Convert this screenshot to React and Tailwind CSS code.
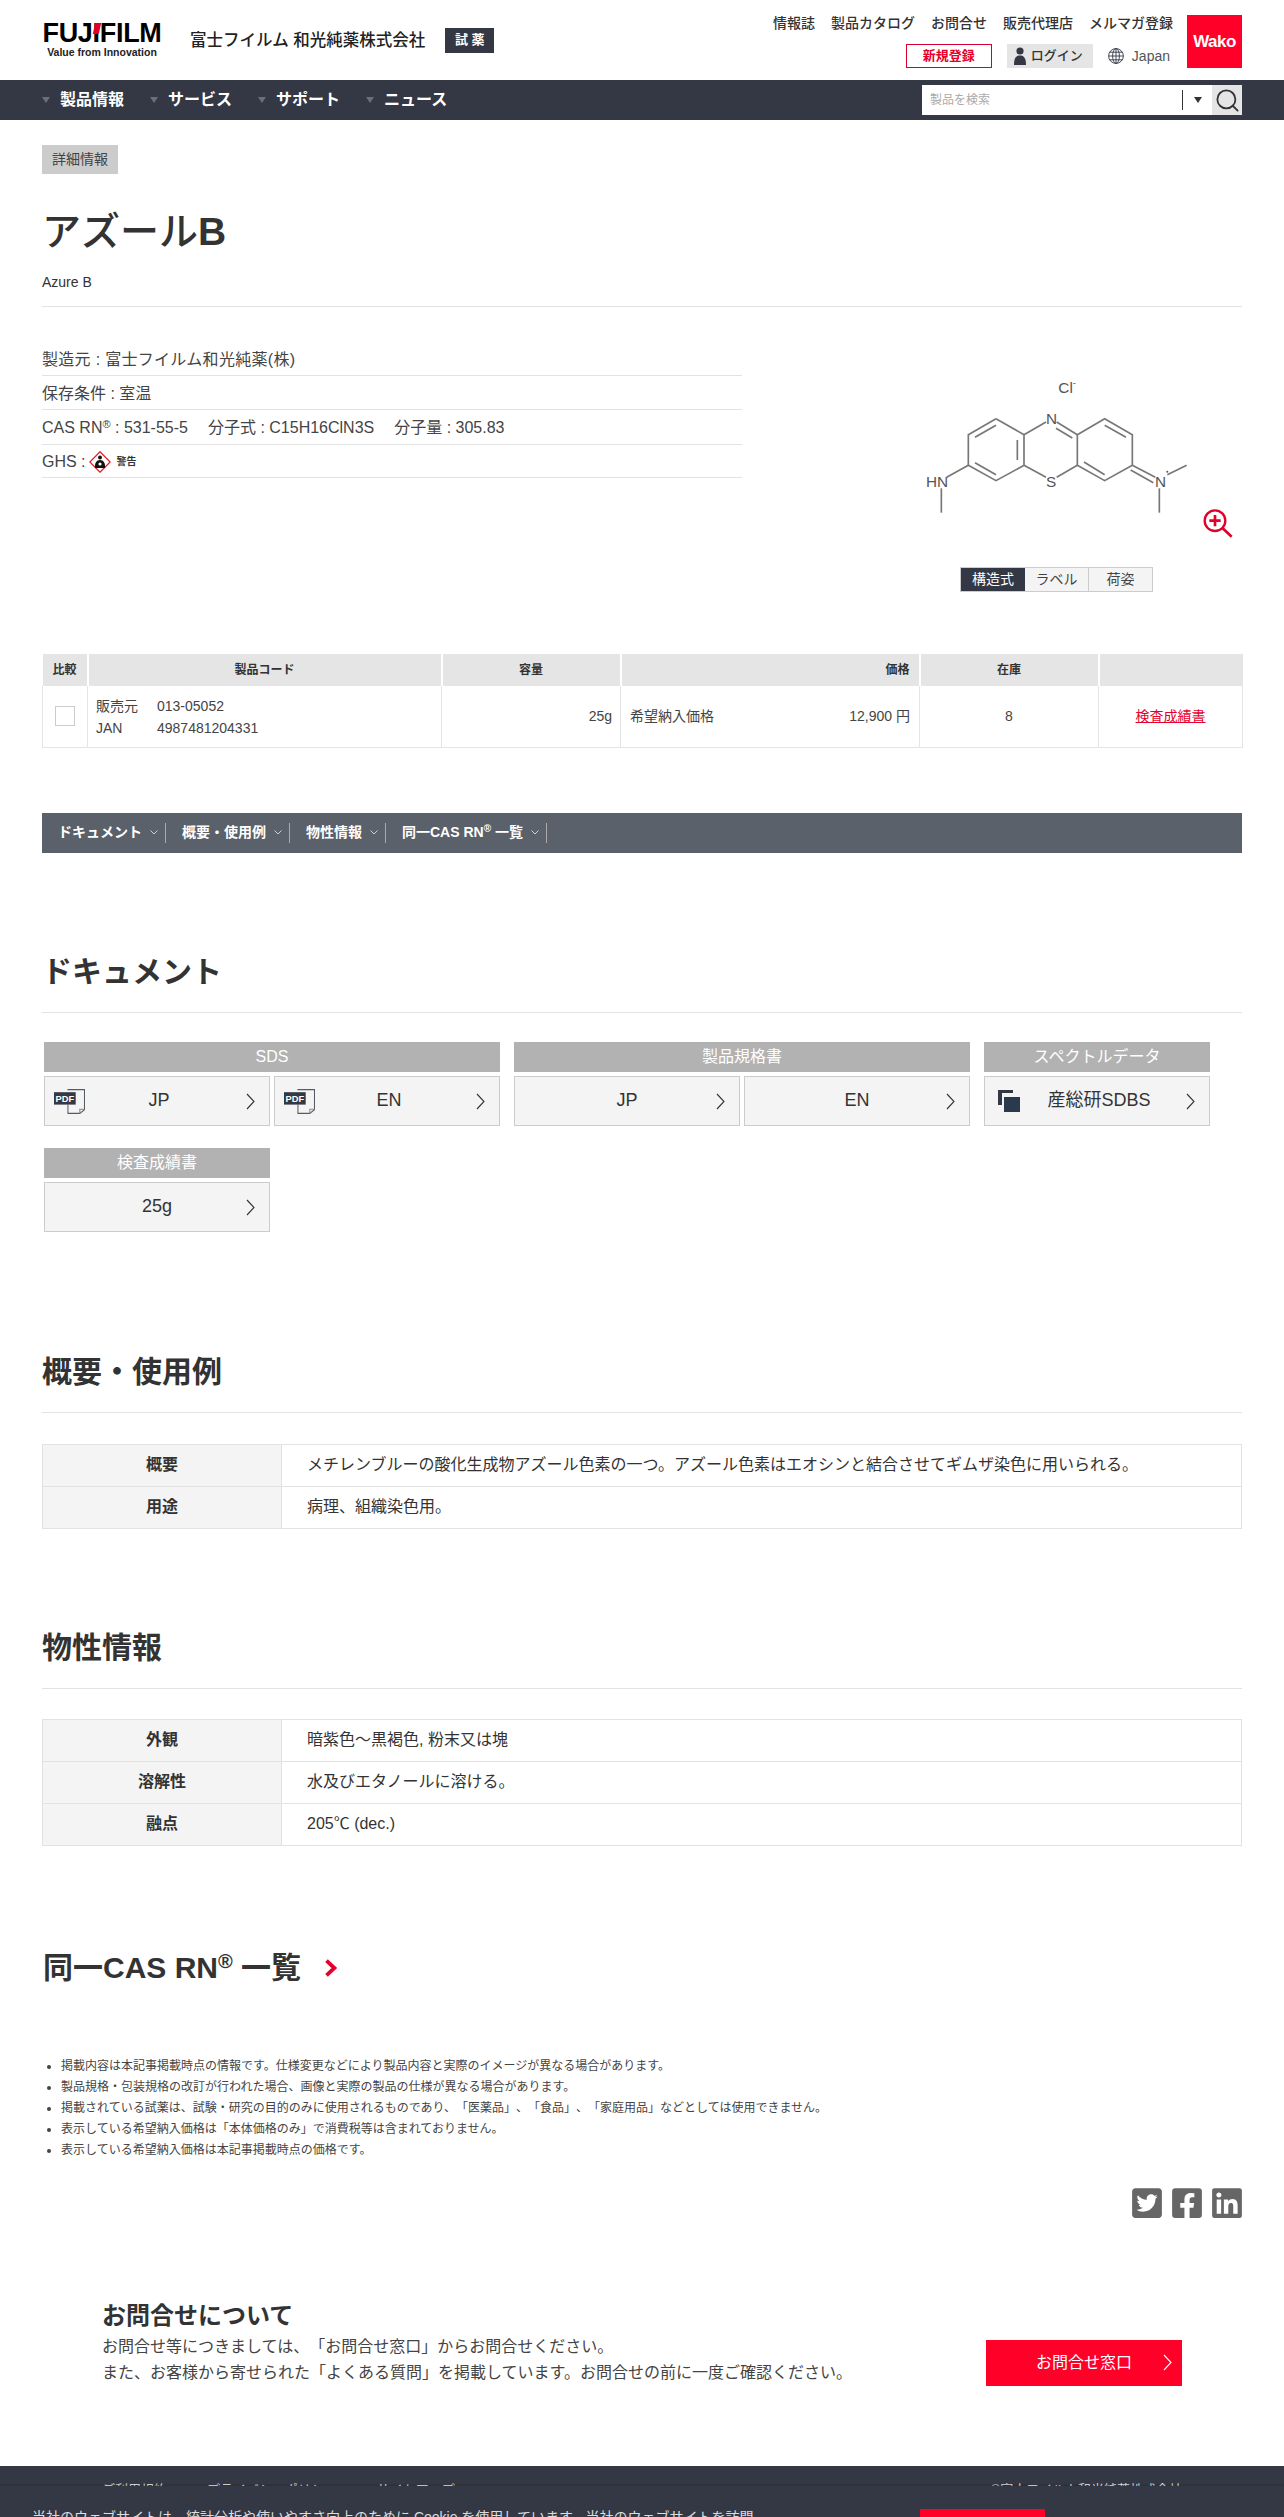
import { Search } from 'lucide-react'
import { FaTwitterSquare, FaFacebookSquare, FaLinkedin } from 'react-icons/fa'

const font = { fontFamily: '"Liberation Sans", "Noto Sans CJK JP", sans-serif' }

const navItems = ['製品情報', 'サービス', 'サポート', 'ニュース']
const topLinks = ['情報誌', '製品カタログ', 'お問合せ', '販売代理店', 'メルマガ登録']
const anchors = ['ドキュメント', '概要・使用例', '物性情報']
const notes = [
  '掲載内容は本記事掲載時点の情報です。仕様変更などにより製品内容と実際のイメージが異なる場合があります。',
  '製品規格・包装規格の改訂が行われた場合、画像と実際の製品の仕様が異なる場合があります。',
  '掲載されている試薬は、試験・研究の目的のみに使用されるものであり、「医薬品」、「食品」、「家庭用品」などとしては使用できません。',
  '表示している希望納入価格は「本体価格のみ」で消費税等は含まれておりません。',
  '表示している希望納入価格は本記事掲載時点の価格です。',
]

function Chevron({ className = 'w-[9px] h-[17px] text-[#333]' }) {
  return (
    <svg viewBox="0 0 9 17" className={className} fill="none" stroke="currentColor" strokeWidth="1.1">
      <polyline points="1,1 8,8.5 1,16" />
    </svg>
  )
}

function PdfIcon() {
  return (
    <svg viewBox="0 0 30 24" className="absolute left-[9px] top-[12px] w-[31px] h-[25px]">
      <path d="M13 .5H29.5V20L25 23.5H13.5V15" fill="none" stroke="#555b64" strokeWidth="1" />
      <path d="M25 23.5V19.5H29.5" fill="none" stroke="#888" strokeWidth="1" />
      <rect x="0" y="3" width="21" height="12" fill="#333844" />
      <text x="10.5" y="12.5" textAnchor="middle" fontSize="9" fontWeight="700" fill="#fff" fontFamily="Liberation Sans">PDF</text>
    </svg>
  )
}

function CopyIcon() {
  return (
    <svg viewBox="0 0 22 22" className="absolute left-[13px] top-[13px] w-[22px] h-[22px]">
      <path d="M0 0H15V3H4V15H0Z" fill="#333844" />
      <rect x="6" y="7" width="16" height="15" fill="#2a3a4c" />
    </svg>
  )
}

function DocButton({ label, icon }) {
  return (
    <div className="relative flex h-[50px] w-[226px] items-center justify-center border border-[#ccc] bg-[#f4f4f4] text-[18px] text-[#333]">
      {icon}
      <span className={icon ? 'ml-[4px]' : ''}>{label}</span>
      <span className="absolute right-[14px] top-[16px]"><Chevron /></span>
    </div>
  )
}

function DocGroup({ title, children, width = 'w-[226px]' }) {
  return (
    <div className={width}>
      <div className="flex h-[30px] items-center justify-center bg-[#b2b2b2] text-[16px] text-white">{title}</div>
      <div className="mt-[4px] flex gap-[4px]">{children}</div>
    </div>
  )
}

function SpecTable({ rows }) {
  return (
    <div className="border border-b-0 border-[#e2e2e2] text-[16px]">
      {rows.map(([k, v]) => (
        <div key={k} className="flex h-[42px] border-b border-[#e2e2e2]">
          <div className="flex w-[239px] items-center justify-center border-r border-[#e2e2e2] bg-[#f4f4f4] font-bold text-[#333]">{k}</div>
          <div className="flex flex-1 items-center pl-[25px] text-[#333]">{v}</div>
        </div>
      ))}
    </div>
  )
}

function Molecule() {
  const bonds = [
    '348,176 265,224 265,316 348,362 432,316 432,224 348,176',
    '285,232 348,196', '285,308 348,344', '412,240 412,300',
    '432,224 498,186', '530,186 592,224', '528,205 577,234',
    '432,316 498,352', '530,352 592,316',
    '592,224 674,176 757,224 757,316 674,362 592,316 592,224',
    '674,196 738,232', '612,306 674,344',
    '757,316 826,352', '752,330 820,368',
    '862,344 920,316', '838,385 838,458',
    '265,316 200,352', '184,385 184,458',
  ]
  return (
    <svg viewBox="0 0 1086 570" className="block h-[190px] w-[362px]">
      {bonds.map((p) => (
        <polyline key={p} points={p} fill="none" stroke="#777" strokeWidth="5" />
      ))}
      <g fontFamily="Liberation Sans" fontSize="46" fill="#555">
        <text x="535" y="98">Cl</text>
        <text x="578" y="78" fontSize="28">-</text>
        <text x="498" y="192">N</text>
        <text x="498" y="382">S</text>
        <text x="138" y="381">HN</text>
        <text x="825" y="382">N</text>
      </g>
      <circle cx="862" cy="335" r="3" fill="#555" />
      <g fill="none" stroke="#e0002a" strokeWidth="7">
        <circle cx="1005" cy="482" r="31" />
        <path d="M1028 505 1055 530" strokeWidth="8" />
        <path d="M988 482H1022M1005 465V499" strokeWidth="8" />
      </g>
    </svg>
  )
}

function GhsIcon() {
  return (
    <svg viewBox="0 0 22 22" className="mx-[3px] h-[22px] w-[22px]">
      <path d="M11 .8 21.2 11 11 21.2 .8 11Z" fill="#fff" stroke="#e0202a" strokeWidth="1.3" />
      <circle cx="11" cy="6.5" r="2" fill="#111" />
      <path d="M6 17C5.5 12 7.5 9 11 9S16.5 12 16 17Z" fill="#111" />
      <circle cx="11" cy="13" r="1.6" fill="#fff" />
    </svg>
  )
}

export default function App() {
  return (
    <div style={font} className="relative h-[2517px] overflow-hidden bg-white text-[#333] [text-spacing-trim:space-all]">
      <header className="flex h-20 justify-between px-[42px]">
        <div className="flex items-center">
          <div className="w-[120px]">
            <div className="flex h-[22px] items-center justify-center text-[27px] font-bold leading-[22px] tracking-[-0.3px] text-black">
              FUJ
              <span className="relative inline-block">
                I
                <span className="absolute left-[1px] top-[1px] h-[11px] w-[6px] -skew-x-12 bg-[#e0002a]" />
              </span>
              FILM
            </div>
            <div className="mt-[3px] text-center text-[10.5px] font-bold leading-[11px] text-[#222]">Value from Innovation</div>
          </div>
          <div className="ml-[28px] whitespace-nowrap text-[16.5px] font-medium leading-none text-[#222]">富士フイルム 和光純薬株式会社</div>
          <div className="ml-[20px] flex h-[25px] w-[49px] items-center justify-center bg-[#333844] text-[13px] font-bold text-white">試 薬</div>
        </div>
        <div className="flex pt-[15px]">
          <div className="mr-[14px] flex flex-col items-end">
            <div className="flex h-[16px] gap-[16px] text-[14px] font-medium leading-[16px] text-[#333]">
              {topLinks.map((t) => <span key={t}>{t}</span>)}
            </div>
            <div className="mt-[13px] flex h-[24px] items-center">
              <div className="flex h-[24px] w-[86px] items-center justify-center border border-[#d5002b] text-[13px] font-bold text-[#e6002d]">新規登録</div>
              <div className="ml-[15px] flex h-[24px] w-[86px] items-center bg-[#e5e5e5] pl-[7px] text-[13px] font-medium text-[#333]">
                <svg viewBox="0 0 12 18" className="mr-[5px] h-[18px] w-[12px]" fill="#333844">
                  <circle cx="6" cy="4" r="3.6" />
                  <path d="M0 18C0 11 2 8.5 6 8.5S12 11 12 18Z" />
                </svg>
                ログイン
              </div>
              <svg viewBox="0 0 16 16" className="ml-[15px] h-[16px] w-[16px]" fill="none" stroke="#333844" strokeWidth="0.9">
                <circle cx="8" cy="8" r="7.4" />
                <ellipse cx="8" cy="8" rx="3.4" ry="7.4" />
                <path d="M8 .6V15.4M.6 8H15.4M1.6 4.2H14.4M1.6 11.8H14.4" />
              </svg>
              <span className="ml-[8px] mr-[3px] text-[14px] text-[#555]">Japan</span>
            </div>
          </div>
          <div className="flex h-[53px] w-[55px] items-center justify-center bg-[#ff0029] text-[17px] font-bold tracking-[-0.5px] text-white">Wako</div>
        </div>
      </header>

      <nav className="flex h-10 items-center justify-between bg-[#333844] pl-[42px] pr-[42px]">
        <div className="flex">
          {navItems.map((t) => (
            <div key={t} className="flex w-[108px] items-center">
              <svg viewBox="0 0 8 6" className="mr-[10px] h-[6px] w-[8px]"><polygon points="0,0 8,0 4,6" fill="#6a707a" /></svg>
              <span className="text-[16px] font-bold leading-none text-white">{t}</span>
            </div>
          ))}
        </div>
        <div className="flex h-[30px] w-[320px] bg-white">
          <div className="flex-1 pl-[8px] text-[12px] leading-[30px] text-[#aaa]">製品を検索</div>
          <div className="flex w-[30px] items-center">
            <span className="h-[20px] w-px bg-[#333]" />
            <svg viewBox="0 0 8 6" className="ml-[11px] h-[6px] w-[8px]"><polygon points="0,0 8,0 4,6" fill="#333" /></svg>
          </div>
          <div className="flex w-[30px] items-center justify-center bg-[#e5e5e5]">
            <Search size={27} strokeWidth={1.6} className="text-[#333]" />
          </div>
        </div>
      </nav>

      <main className="px-[42px]">
        <div className="mt-[25px] flex h-[29px] w-[76px] items-center justify-center bg-[#ccc] text-[14px] text-[#444]">詳細情報</div>
        <h1 className="mt-[34px] h-[48px] text-[39px] font-medium leading-[48px] text-[#333]">アズール<span className="font-bold">B</span></h1>
        <div className="mt-[16px] border-b border-[#e2e2e2] pb-[14px] text-[14px] leading-[20px] text-[#333]">Azure B</div>

        <div className="flex justify-between">
          <div className="w-[700px] pt-[35px] text-[16px] text-[#444]">
            <div className="flex h-[34px] items-center border-b border-[#e2e2e2] pt-[2px] tracking-[0.3px]">製造元 : 富士フイルム和光純薬(株)</div>
            <div className="flex h-[34px] items-center border-b border-[#e2e2e2] pt-[2px]">保存条件 : 室温</div>
            <div className="flex h-[35px] items-center border-b border-[#e2e2e2] pt-[2px]">
              <span>CAS RN<sup className="text-[11px]">®</sup> : 531-55-5</span>
              <span className="ml-[20px]">分子式 : C15H16ClN3S</span>
              <span className="ml-[20px]">分子量 : 305.83</span>
            </div>
            <div className="flex h-[33px] items-center border-b border-[#e2e2e2] pt-[1px]">
              GHS :<GhsIcon /><span className="ml-[3px] text-[10px] font-bold text-[#333]">警告</span>
            </div>
          </div>
          <div className="pt-[53px]">
            <Molecule />
            <div className="ml-[80px] mt-[17px] flex h-[25px] w-[193px] border border-[#ccc] text-[14px]">
              <div className="flex w-[64px] items-center justify-center bg-[#333844] text-white">構造式</div>
              <div className="flex w-[64px] items-center justify-center border-r border-[#ccc] bg-[#f4f4f4] text-[#444]">ラベル</div>
              <div className="flex flex-1 items-center justify-center bg-[#f4f4f4] text-[#444]">荷姿</div>
            </div>
          </div>
        </div>

        <table className="mt-[62px] w-[1200px] table-fixed border-collapse text-[14px] text-[#444]">
          <colgroup>
            <col className="w-[45px]" /><col className="w-[354px]" /><col className="w-[179px]" />
            <col className="w-[299px]" /><col className="w-[179px]" /><col className="w-[144px]" />
          </colgroup>
          <thead>
            <tr className="h-[32px] bg-[#e5e5e5] text-[12px] font-bold text-[#333]">
              <th>比較</th>
              <th className="border-l-2 border-white">製品コード</th>
              <th className="border-l-2 border-white">容量</th>
              <th className="border-l-2 border-white pr-[9px] text-right">価格</th>
              <th className="border-l-2 border-white">在庫</th>
              <th className="border-l-2 border-white" />
            </tr>
          </thead>
          <tbody>
            <tr className="h-[61px] border-b border-[#e5e5e5]">
              <td className="border-l border-[#e5e5e5]">
                <div className="mx-auto h-[20px] w-[20px] border border-[#ccc]" />
              </td>
              <td className="border-l border-[#e5e5e5] pl-[8px] pt-[2px] leading-[22px]">
                <div className="flex"><span className="w-[61px]">販売元</span>013-05052</div>
                <div className="flex"><span className="w-[61px]">JAN</span>4987481204331</div>
              </td>
              <td className="border-l border-[#e5e5e5] pr-[8px] text-right">25g</td>
              <td className="border-l border-[#e5e5e5] px-[9px]">
                <div className="flex justify-between"><span>希望納入価格</span><span>12,900 円</span></div>
              </td>
              <td className="border-l border-[#e5e5e5] text-center">8</td>
              <td className="border-x border-[#e5e5e5] text-center"><span className="text-[#e6002d] underline">検査成績書</span></td>
            </tr>
          </tbody>
        </table>

        <div className="mt-[65px] flex h-10 items-center bg-[#5a616a] text-[14px] font-bold text-white">
          {anchors.map((t) => (
            <div key={t} className="flex items-center pl-[16px]">
              <span>{t}</span>
              <svg viewBox="0 0 8 5" className="ml-[8px] h-[5px] w-[8px]" fill="none" stroke="#ddd" strokeWidth="0.9"><polyline points="0.5,0.5 4,4 7.5,0.5" /></svg>
              <span className="ml-[7px] h-[20px] w-px bg-[#aaa]" />
            </div>
          ))}
          <div className="flex items-center pl-[16px]">
            <span>同一CAS RN<sup className="text-[10px]">®</sup> 一覧</span>
            <svg viewBox="0 0 8 5" className="ml-[8px] h-[5px] w-[8px]" fill="none" stroke="#ddd" strokeWidth="0.9"><polyline points="0.5,0.5 4,4 7.5,0.5" /></svg>
            <span className="ml-[7px] h-[20px] w-px bg-[#aaa]" />
          </div>
        </div>

        <h2 className="mt-[99px] border-b border-[#e2e2e2] pb-[20px] text-[30px] font-bold leading-[40px] text-[#333]">ドキュメント</h2>
        <div className="ml-[2px] mt-[29px] flex flex-wrap gap-x-[14px] gap-y-[22px]">
          <DocGroup title="SDS" width="w-[456px]">
            <DocButton label="JP" icon={<PdfIcon />} />
            <DocButton label="EN" icon={<PdfIcon />} />
          </DocGroup>
          <DocGroup title="製品規格書" width="w-[456px]">
            <DocButton label="JP" />
            <DocButton label="EN" />
          </DocGroup>
          <DocGroup title="スペクトルデータ">
            <DocButton label="産総研SDBS" icon={<CopyIcon />} />
          </DocGroup>
          <DocGroup title="検査成績書">
            <DocButton label="25g" />
          </DocGroup>
        </div>

        <h2 className="mt-[120px] border-b border-[#e2e2e2] pb-[20px] text-[30px] font-bold leading-[40px] text-[#333]">概要・使用例</h2>
        <div className="mt-[31px]">
          <SpecTable rows={[
            ['概要', 'メチレンブルーの酸化生成物アズール色素の一つ。アズール色素はエオシンと結合させてギムザ染色に用いられる。'],
            ['用途', '病理、組織染色用。'],
          ]} />
        </div>

        <h2 className="mt-[99px] border-b border-[#e2e2e2] pb-[20px] text-[30px] font-bold leading-[40px] text-[#333]">物性情報</h2>
        <div className="mt-[30px]">
          <SpecTable rows={[
            ['外観', '暗紫色～黒褐色, 粉末又は塊'],
            ['溶解性', '水及びエタノールに溶ける。'],
            ['融点', '205℃ (dec.)'],
          ]} />
        </div>

        <div className="ml-[1px] mt-[102px] flex h-[40px] items-center text-[30px] font-bold leading-[40px] text-[#333]">
          <span>同一CAS RN<sup className="text-[20px]">®</sup> 一覧</span>
          <svg viewBox="0 0 12 16" className="ml-[23px] h-[18px] w-[14px]" fill="none" stroke="#e6002d" strokeWidth="3.4"><polyline points="2,1.5 9,8 2,14.5" /></svg>
        </div>

        <ul className="mt-[68px] list-disc pl-[19px] text-[12px] leading-[21px] text-[#444]">
          {notes.map((n) => <li key={n}>{n}</li>)}
        </ul>

        <div className="mt-[25px] flex justify-end gap-[10px] text-[#666]">
          <FaTwitterSquare className="h-[34px] w-[30px]" />
          <FaFacebookSquare className="h-[34px] w-[30px]" />
          <FaLinkedin className="h-[34px] w-[30px]" />
        </div>

        <div className="mt-[80px] flex items-start justify-between pl-[60px] pr-[60px]">
          <div>
            <div className="text-[24px] font-bold leading-[32px] text-[#333]">お問合せについて</div>
            <p className="mt-[2px] text-[16px] leading-[26px] text-[#444]">
              お問合せ等につきましては、「お問合せ窓口」からお問合せください。<br />
              また、お客様から寄せられた「よくある質問」を掲載しています。お問合せの前に一度ご確認ください。
            </p>
          </div>
          <div className="relative mt-[40px] flex h-[46px] w-[196px] items-center justify-center bg-[#ff0029] text-[16px] text-white">
            お問合せ窓口
            <span className="absolute right-[10px] top-[14px]"><Chevron className="h-[17px] w-[9px] text-white" /></span>
          </div>
        </div>
      </main>

      <footer className="mt-[80px] flex h-[60px] justify-between bg-[#333844] px-[102px] pt-[14px] text-[13px] text-[#ddd]">
        <div className="flex gap-[40px]">
          <span>ご利用規約</span>
          <span>プライバシーポリシー</span>
          <span>サイトマップ</span>
        </div>
        <span>©富士フイルム和光純薬株式会社</span>
      </footer>

      <div className="absolute inset-x-0 bottom-0 h-[31px] overflow-hidden bg-[#333844] shadow-[0_-1px_2px_rgba(0,0,0,0.2)]">
        <div className="absolute left-[32px] top-[21px] whitespace-nowrap text-[14px] leading-[20px] text-[#ddd]">当社のウェブサイトは、統計分析や使いやすさ向上のために Cookie を使用しています。当社のウェブサイトを訪問</div>
        <div className="absolute left-[920px] top-[23px] h-[40px] w-[125px] bg-[#ff0029]" />
      </div>
    </div>
  )
}
